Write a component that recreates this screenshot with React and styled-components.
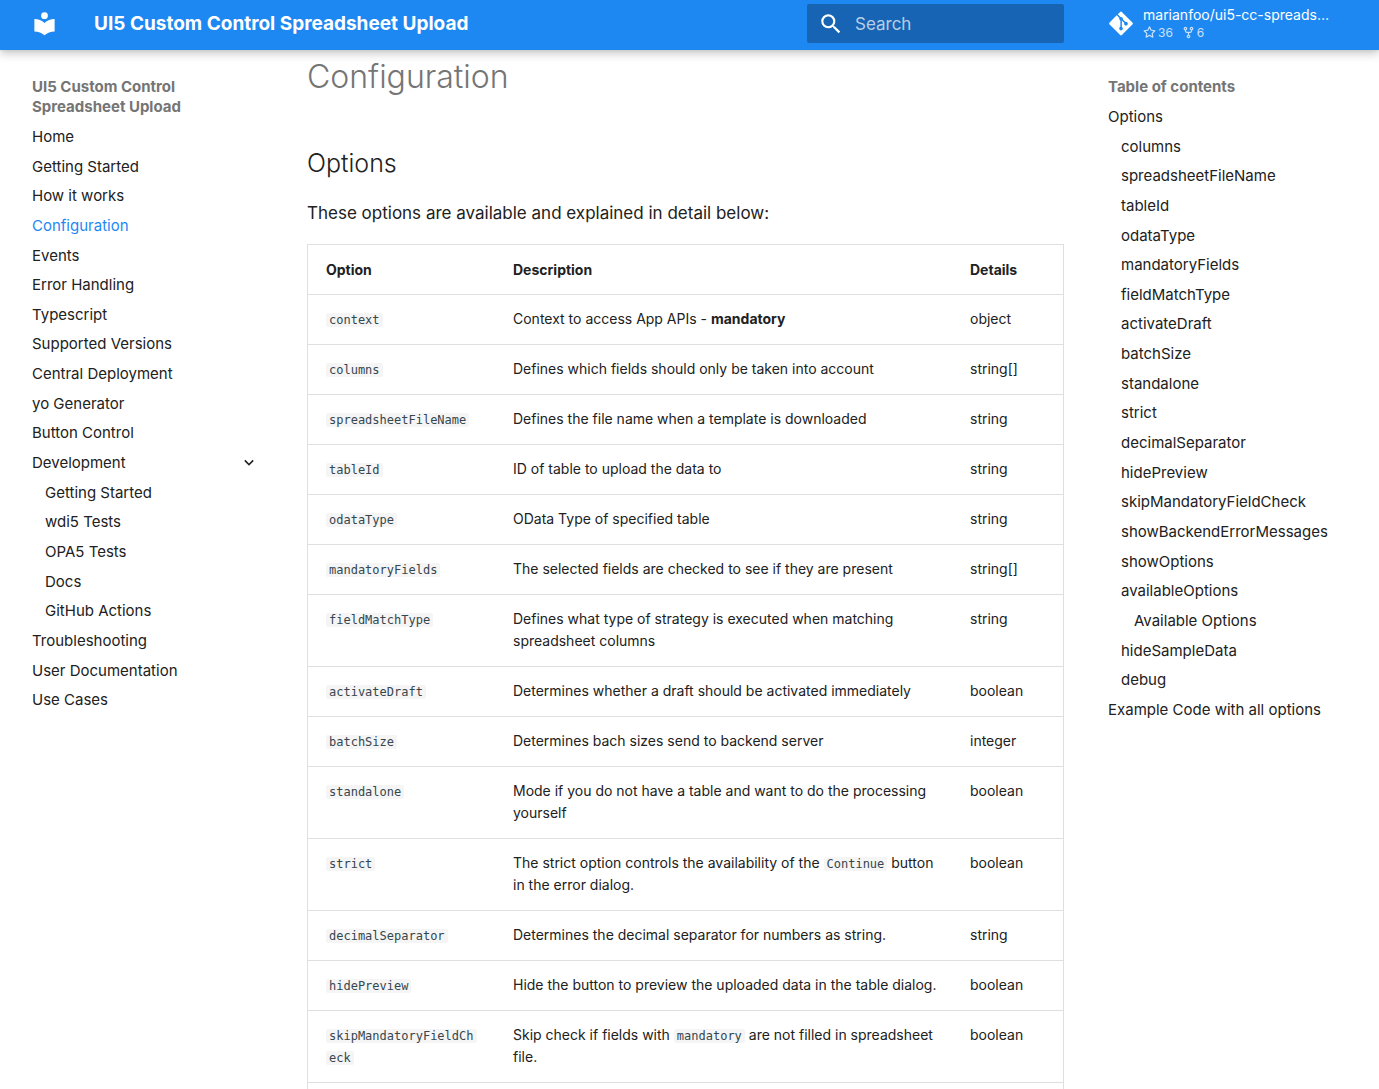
import React from 'react';
import styled, { createGlobalStyle } from 'styled-components';
import { FaGitAlt } from 'react-icons/fa';

const GlobalStyle = createGlobalStyle`
  * {
    box-sizing: border-box;
  }

  body {
    margin: 0;
    background: #fff;
    color: #212121;
    font-family: Inter, "Liberation Sans", sans-serif;
  }

  a {
    color: inherit;
    text-decoration: none;
  }
`;

const Page = styled.div`
  display: flex;
  flex-direction: column;
  height: 100vh;
  overflow: hidden;
`;

const Header = styled.header`
  position: relative;
  z-index: 1;
  flex: none;
  color: #fff;
  background: #1e88f2;
  box-shadow: 0 0 4px rgba(0, 0, 0, 0.1), 0 4px 9px rgba(0, 0, 0, 0.2);
`;

const HeaderInner = styled.div`
  display: flex;
  align-items: center;
  max-width: 1343px;
  height: 50px;
  margin: 0 auto;
  padding-bottom: 3px;
`;

const LogoLink = styled.a`
  display: flex;
  margin: 0 36px 0 13px;

  svg {
    width: 27px;
    height: 27px;
    fill: currentColor;
  }
`;

const SiteTitle = styled.span`
  flex: 1;
  font-size: 19px;
  font-weight: 700;
  white-space: nowrap;
`;

const SearchBox = styled.label`
  display: flex;
  align-items: center;
  width: 257px;
  height: 39px;
  padding-left: 11px;
  border-radius: 2px;
  background: rgba(0, 0, 0, 0.26);

  svg {
    flex: none;
    width: 26px;
    height: 26px;
    fill: currentColor;
  }
`;

const SearchInput = styled.input`
  width: 100%;
  margin-left: 11px;
  padding: 0;
  border: 0;
  outline: 0;
  background: transparent;
  color: #fff;
  font: inherit;
  font-size: 17px;

  &::placeholder {
    color: rgba(255, 255, 255, 0.7);
  }
`;

const SourceLink = styled.a`
  display: flex;
  align-items: center;
  width: 297px;
  padding-left: 45px;
`;

const GitIcon = styled(FaGitAlt)`
  flex: none;
  width: 24px;
  height: 27px;
`;

const Repository = styled.div`
  margin-left: 10px;
  font-size: 14px;
  line-height: 18px;
  white-space: nowrap;
`;

const Facts = styled.div`
  display: flex;
  gap: 9px;
  font-size: 12px;
  line-height: 17px;
  opacity: 0.75;
`;

const Fact = styled.span`
  display: flex;
  align-items: center;
  gap: 2px;

  svg {
    width: 13px;
    height: 13px;
    fill: currentColor;
  }
`;

const Columns = styled.div`
  display: grid;
  grid-template-columns: 266px minmax(0, 1fr) 267px;
  flex: 1;
  width: 100%;
  max-width: 1343px;
  min-height: 0;
  margin: 0 auto;
`;

const Sidebar = styled.nav`
  padding: 27px 30px 0 14px;
  font-size: 15px;
  line-height: 1.31;
`;

const SidebarTitle = styled.div`
  color: #757575;
  font-weight: 700;
  line-height: 20px;
`;

const NavList = styled.ul`
  margin: 0;
  padding: 0 0 0 ${({ $nested }) => ($nested ? '13px' : '0')};
  list-style: none;
`;

const NavItem = styled.li`
  white-space: nowrap;
`;

const NavLink = styled.a`
  display: flex;
  align-items: center;
  justify-content: space-between;
  margin-top: 10px;

  && {
    color: ${({ $active }) => ($active ? '#1e88f2' : 'inherit')};
  }
`;

const Chevron = styled.svg`
  width: 20px;
  height: 19px;
  margin-right: -5px;
  fill: currentColor;
`;

const Content = styled.main`
  display: flex;
  flex-direction: column;
  min-height: 0;
  margin: 0 30px 0 23px;
`;

const PageHeading = styled.h1`
  margin: 5px 0 42px;
  color: #757575;
  font-size: 32px;
  font-weight: 300;
  line-height: 44px;
`;

const SectionHeading = styled.h2`
  margin: 0 0 14px;
  font-size: 25px;
  font-weight: 300;
  line-height: 44px;
`;

const Intro = styled.p`
  margin: 0 0 17px;
  font-size: 17px;
  line-height: 28px;
`;

const TableFrame = styled.div`
  flex: 1;
  min-height: 0;
  overflow: hidden;
  border: 1px solid #dfdfdf;
  border-bottom: 0;
`;

const Table = styled.table`
  width: 100%;
  border-collapse: separate;
  border-spacing: 0;
  table-layout: fixed;
  font-size: 14px;
  line-height: 22px;
`;

const HeadCell = styled.th`
  width: ${({ $width }) => $width || 'auto'};
  padding: 14px 18px 13px;
  border-bottom: 1px solid #dfdfdf;
  font-weight: 700;
  text-align: left;
`;

const Cell = styled.td`
  padding: 13px ${({ $wide }) => ($wide ? '12px' : '18px')} 14px 18px;
  border-bottom: 1px solid #dfdfdf;
  vertical-align: top;
`;

const Code = styled.code`
  padding: 0 3px;
  border-radius: 2px;
  background: #f5f5f5;
  color: #36464e;
  font-family: "DejaVu Sans Mono", monospace;
  font-size: 12px;
  line-height: 1;
  word-break: break-all;
  box-decoration-break: clone;
  -webkit-box-decoration-break: clone;
`;

const navItems = [
  { label: 'Home' },
  { label: 'Getting Started' },
  { label: 'How it works' },
  { label: 'Configuration', active: true },
  { label: 'Events' },
  { label: 'Error Handling' },
  { label: 'Typescript' },
  { label: 'Supported Versions' },
  { label: 'Central Deployment' },
  { label: 'yo Generator' },
  { label: 'Button Control' },
  {
    label: 'Development',
    toggle: true,
    children: [
      { label: 'Getting Started' },
      { label: 'wdi5 Tests' },
      { label: 'OPA5 Tests' },
      { label: 'Docs' },
      { label: 'GitHub Actions' },
    ],
  },
  { label: 'Troubleshooting' },
  { label: 'User Documentation' },
  { label: 'Use Cases' },
];

const tocItems = [
  {
    label: 'Options',
    children: [
      { label: 'columns' },
      { label: 'spreadsheetFileName' },
      { label: 'tableId' },
      { label: 'odataType' },
      { label: 'mandatoryFields' },
      { label: 'fieldMatchType' },
      { label: 'activateDraft' },
      { label: 'batchSize' },
      { label: 'standalone' },
      { label: 'strict' },
      { label: 'decimalSeparator' },
      { label: 'hidePreview' },
      { label: 'skipMandatoryFieldCheck' },
      { label: 'showBackendErrorMessages' },
      { label: 'showOptions' },
      { label: 'availableOptions', children: [{ label: 'Available Options' }] },
      { label: 'hideSampleData' },
      { label: 'debug' },
    ],
  },
  { label: 'Example Code with all options' },
];

const options = [
  ['context', <>Context to access App APIs - <strong>mandatory</strong></>, 'object'],
  ['columns', 'Defines which fields should only be taken into account', 'string[]'],
  ['spreadsheetFileName', 'Defines the file name when a template is downloaded', 'string'],
  ['tableId', 'ID of table to upload the data to', 'string'],
  ['odataType', 'OData Type of specified table', 'string'],
  ['mandatoryFields', 'The selected fields are checked to see if they are present', 'string[]'],
  ['fieldMatchType', 'Defines what type of strategy is executed when matching spreadsheet columns', 'string'],
  ['activateDraft', 'Determines whether a draft should be activated immediately', 'boolean'],
  ['batchSize', 'Determines bach sizes send to backend server', 'integer'],
  ['standalone', 'Mode if you do not have a table and want to do the processing yourself', 'boolean'],
  ['strict', <>The strict option controls the availability of the <Code>Continue</Code> button in the error dialog.</>, 'boolean'],
  ['decimalSeparator', 'Determines the decimal separator for numbers as string.', 'string'],
  ['hidePreview', 'Hide the button to preview the uploaded data in the table dialog.', 'boolean'],
  ['skipMandatoryFieldCheck', <>Skip check if fields with <Code>mandatory</Code> are not filled in spreadsheet file.</>, 'boolean'],
];

function Nav({ items, nested }) {
  return (
    <NavList $nested={nested}>
      {items.map((item) => (
        <NavItem key={item.label}>
          <NavLink href="#" $active={item.active}>
            {item.label}
            {item.toggle && (
              <Chevron viewBox="0 0 24 24">
                <path d="M7.41 8.58 12 13.17l4.59-4.59L18 10l-6 6-6-6z" />
              </Chevron>
            )}
          </NavLink>
          {item.children && <Nav items={item.children} nested />}
        </NavItem>
      ))}
    </NavList>
  );
}

function App() {
  return (
    <Page>
      <GlobalStyle />
      <Header>
        <HeaderInner>
          <LogoLink href="#" aria-label="Home">
            <svg viewBox="0 0 24 24">
              <path d="M12 8a3 3 0 0 0 3-3 3 3 0 0 0-3-3 3 3 0 0 0-3 3 3 3 0 0 0 3 3m0 3.54C9.64 9.35 6.5 8 3 8v11c3.5 0 6.64 1.35 9 3.54 2.36-2.19 5.5-3.54 9-3.54V8c-3.5 0-6.64 1.35-9 3.54Z" />
            </svg>
          </LogoLink>
          <SiteTitle>UI5 Custom Control Spreadsheet Upload</SiteTitle>
          <SearchBox>
            <svg viewBox="0 0 24 24">
              <path d="M9.5 3A6.5 6.5 0 0 1 16 9.5c0 1.61-.59 3.09-1.56 4.23l.27.27h.79l5 5-1.5 1.5-5-5v-.79l-.27-.27A6.516 6.516 0 0 1 9.5 16 6.5 6.5 0 0 1 3 9.5 6.5 6.5 0 0 1 9.5 3m0 2C7 5 5 7 5 9.5S7 14 9.5 14 14 12 14 9.5 12 5 9.5 5Z" />
            </svg>
            <SearchInput type="text" placeholder="Search" aria-label="Search" />
          </SearchBox>
          <SourceLink href="#">
            <GitIcon />
            <Repository>
              <div>marianfoo/ui5-cc-spreads…</div>
              <Facts>
                <Fact>
                  <svg viewBox="0 0 16 16">
                    <path d="M8 .25a.75.75 0 0 1 .673.418l1.882 3.815 4.21.612a.75.75 0 0 1 .416 1.279l-3.046 2.97.719 4.192a.751.751 0 0 1-1.088.791L8 12.347l-3.766 1.98a.75.75 0 0 1-1.088-.79l.72-4.194L.818 6.374a.75.75 0 0 1 .416-1.28l4.21-.611L7.327.668A.75.75 0 0 1 8 .25Zm0 2.445L6.615 5.5a.75.75 0 0 1-.564.41l-3.097.45 2.24 2.184a.75.75 0 0 1 .216.664l-.528 3.084 2.769-1.456a.75.75 0 0 1 .698 0l2.77 1.456-.53-3.084a.75.75 0 0 1 .216-.664l2.24-2.183-3.096-.45a.75.75 0 0 1-.564-.41L8 2.694Z" />
                  </svg>
                  36
                </Fact>
                <Fact>
                  <svg viewBox="0 0 16 16">
                    <path d="M5 5.372v.878c0 .414.336.75.75.75h4.5a.75.75 0 0 0 .75-.75v-.878a2.25 2.25 0 1 1 1.5 0v.878a2.25 2.25 0 0 1-2.25 2.25h-1.5v2.128a2.251 2.251 0 1 1-1.5 0V8.5h-1.5A2.25 2.25 0 0 1 3.5 6.25v-.878a2.25 2.25 0 1 1 1.5 0ZM5 3.25a.75.75 0 1 0-1.5 0 .75.75 0 0 0 1.5 0Zm6.75.75a.75.75 0 1 0 0-1.5.75.75 0 0 0 0 1.5Zm-3 8.75a.75.75 0 1 0-1.5 0 .75.75 0 0 0 1.5 0Z" />
                  </svg>
                  6
                </Fact>
              </Facts>
            </Repository>
          </SourceLink>
        </HeaderInner>
      </Header>

      <Columns>
        <Sidebar aria-label="Navigation">
          <SidebarTitle>UI5 Custom Control Spreadsheet Upload</SidebarTitle>
          <Nav items={navItems} />
        </Sidebar>

        <Content>
          <PageHeading>Configuration</PageHeading>
          <SectionHeading>Options</SectionHeading>
          <Intro>These options are available and explained in detail below:</Intro>
          <TableFrame>
            <Table>
              <thead>
                <tr>
                  <HeadCell $width="187px">Option</HeadCell>
                  <HeadCell>Description</HeadCell>
                  <HeadCell $width="111px">Details</HeadCell>
                </tr>
              </thead>
              <tbody>
                {options.map(([name, description, type]) => (
                  <tr key={name}>
                    <Cell><Code>{name}</Code></Cell>
                    <Cell $wide>{description}</Cell>
                    <Cell>{type}</Cell>
                  </tr>
                ))}
              </tbody>
            </Table>
          </TableFrame>
        </Content>

        <Sidebar aria-label="Table of contents">
          <SidebarTitle>Table of contents</SidebarTitle>
          <Nav items={tocItems} />
        </Sidebar>
      </Columns>
    </Page>
  );
}

export default App;
